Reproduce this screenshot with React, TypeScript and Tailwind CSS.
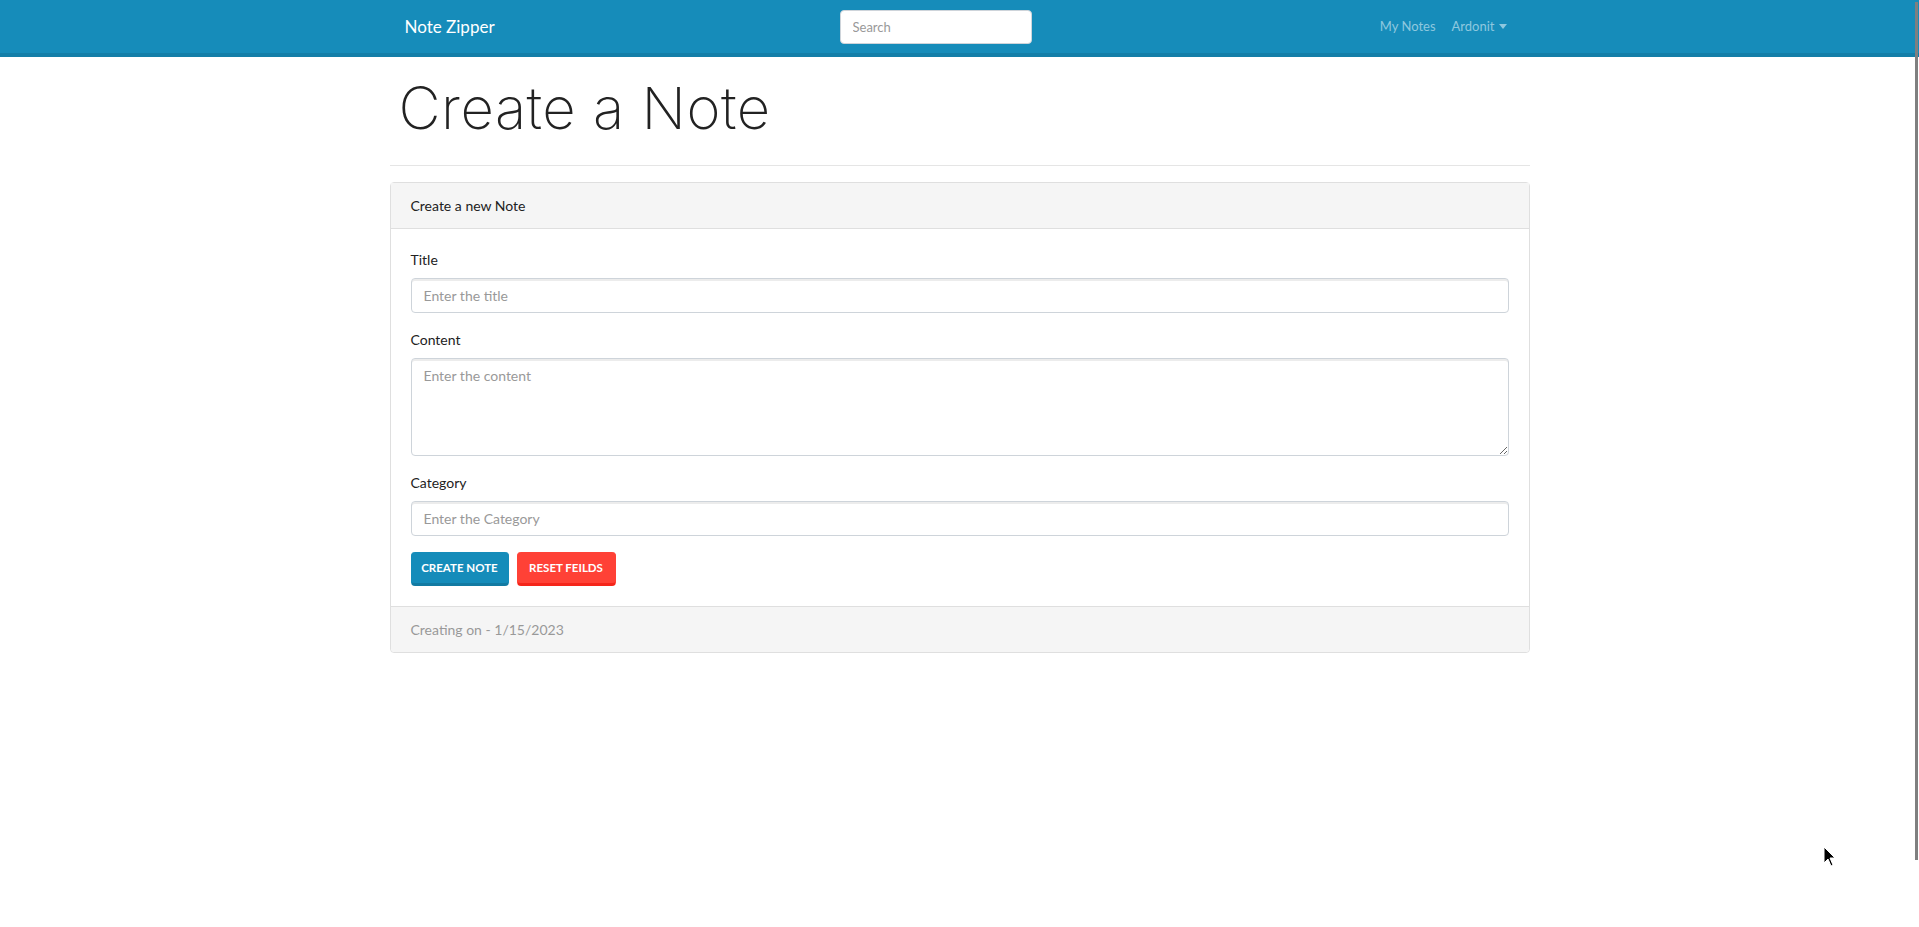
import { useState } from 'react';

function Field({
  label,
  placeholder,
  value,
  onChange,
  multiline,
}: {
  label: string;
  placeholder: string;
  value: string;
  onChange: (v: string) => void;
  multiline?: boolean;
}) {
  const base =
    'block w-full rounded-[4px] border border-[#ced4da] bg-white px-[12px] text-[14px] text-[#222] shadow-[inset_0_2px_0_rgba(0,0,0,0.075)] outline-none placeholder:text-[#999]';
  return (
    <div className="mb-[16px]">
      <label className="mb-[8px] block text-[14px] leading-[21px] text-[#222]">{label}</label>
      {multiline ? (
        <textarea
          rows={4}
          placeholder={placeholder}
          value={value}
          onChange={(e) => onChange(e.target.value)}
          className={`${base} h-[98px] py-[6px] leading-[21px]`}
        />
      ) : (
        <input
          type="text"
          placeholder={placeholder}
          value={value}
          onChange={(e) => onChange(e.target.value)}
          className={`${base} h-[35px] leading-[21px]`}
        />
      )}
    </div>
  );
}

export default function App() {
  const [title, setTitle] = useState('');
  const [content, setContent] = useState('');
  const [category, setCategory] = useState('');

  const resetHandler = () => {
    setTitle('');
    setContent('');
    setCategory('');
  };

  return (
    <div className="relative min-h-screen bg-white font-['Lato','Liberation_Sans',sans-serif] text-[#222]">
      {/* Navbar */}
      <header className="h-[57px] border-b-4 border-[#137ea8] bg-[#168cba]">
        <div className="mx-auto flex h-[53px] w-[1140px] items-center pl-[15px] pr-[15px]">
          <a className="w-[435px] shrink-0 text-[17px] leading-[26px] text-white">Note Zipper</a>
          <input
            type="text"
            placeholder="Search"
            className="h-[34px] w-[192px] rounded-[4px] border border-[#ced4da] bg-white px-[12px] text-[13px] text-[#222] outline-none placeholder:text-[#999]"
          />
          <nav className="ml-auto flex items-center text-[13px] text-[#8ec8df]">
            <a className="px-[8px]">My Notes</a>
            <a className="flex items-center px-[8px]">
              Ardonit
              <span className="ml-[4px] h-0 w-0 border-x-[4px] border-t-[5px] border-x-transparent border-t-[#8ec8df]" />
            </a>
          </nav>
        </div>
      </header>

      {/* Page */}
      <main className="mx-auto w-[1140px]">
        <h1 className="mt-[16px] pl-[9px] font-['Inter','Lato',sans-serif] text-[58px] font-extralight leading-[70px] tracking-[0.5px] text-[#222]">
          Create a Note
        </h1>
        <hr className="mt-[22px] border-t border-[#e5e5e5]" />

        <div className="mt-[16px] rounded-[4px] border border-[#dfdfdf]">
          <div className="border-b border-[#dfdfdf] bg-[#f5f5f5] px-[20px] py-[12px] text-[14px] leading-[21px]">
            Create a new Note
          </div>
          <div className="px-[20px] pt-[20px] pb-[20px]">
            <Field label="Title" placeholder="Enter the title" value={title} onChange={setTitle} />
            <Field
              label="Content"
              placeholder="Enter the content"
              value={content}
              onChange={setContent}
              multiline
            />
            <Field label="Category" placeholder="Enter the Category" value={category} onChange={setCategory} />
            <div className="flex gap-[8px]">
              <button className="h-[34px] w-[98px] rounded-[4px] border-x border-b-[3px] border-[#127aa2] border-x-[#158cba] bg-[#158cba] text-[11.5px] font-bold uppercase text-white">
                Create Note
              </button>
              <button
                onClick={resetHandler}
                className="h-[34px] w-[99px] rounded-[4px] border-x border-b-[3px] border-[#f5251a] border-x-[#ff4136] bg-[#ff4136] text-[11.5px] font-bold uppercase text-white"
              >
                Reset Feilds
              </button>
            </div>
          </div>
          <div className="rounded-b-[4px] border-t border-[#dfdfdf] bg-[#f5f5f5] px-[20px] py-[12px] text-[14px] leading-[21px] text-[#999]">
            Creating on - 1/15/2023
          </div>
        </div>
      </main>

      {/* overlay scrollbar thumb */}
      <div className="pointer-events-none absolute right-[1px] top-[2px] h-[858px] w-[3px] bg-[#7f7f7f]" />

      {/* mouse pointer */}
      <svg className="pointer-events-none absolute left-[1823px] top-[846px]" width="14" height="22" viewBox="0 0 14 22">
        <path d="M1 1 L1 17 L5 13 L8 20 L10 19 L7 12 L12 12 Z" fill="#000" stroke="#fff" strokeWidth="1" />
      </svg>
    </div>
  );
}
